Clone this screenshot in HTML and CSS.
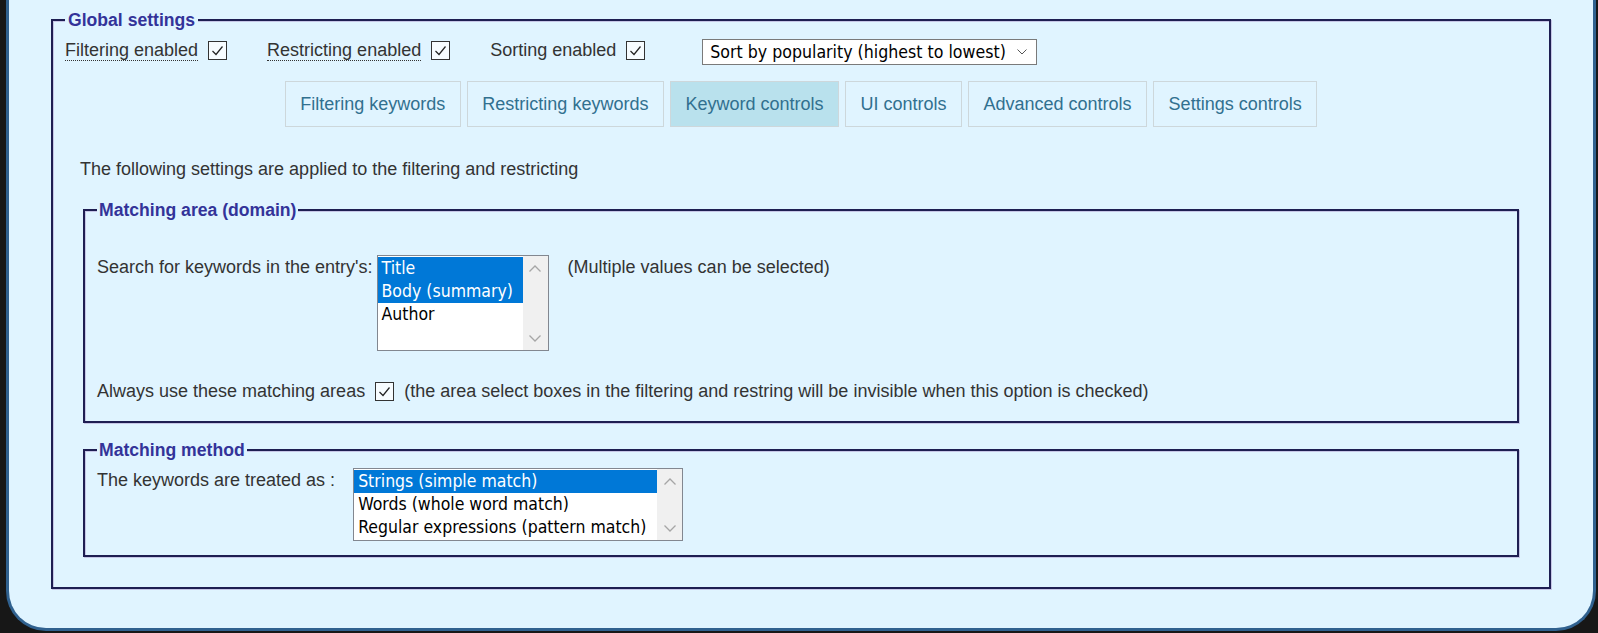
FILE: index.html
```html
<!DOCTYPE html>
<html>
<head>
<meta charset="utf-8">
<link rel="stylesheet" href="styles.css">
</head>
<body>
<div class="frame">
  <fieldset class="fs global">
    <legend>Global settings</legend>
    <div class="toprow">
      <div class="cbgroup">
        <span class="lbl dotted">Filtering enabled</span>
        <span class="cb"><svg viewBox="0 0 17 17" width="17" height="17"><path d="M3.5 9 L7 12.5 L13.5 4.5" fill="none" stroke="#222" stroke-width="1.2"/></svg></span>
      </div>
      <div class="cbgroup">
        <span class="lbl dotted">Restricting enabled</span>
        <span class="cb"><svg viewBox="0 0 17 17" width="17" height="17"><path d="M3.5 9 L7 12.5 L13.5 4.5" fill="none" stroke="#222" stroke-width="1.2"/></svg></span>
      </div>
      <div class="cbgroup">
        <span class="lbl">Sorting enabled</span>
        <span class="cb"><svg viewBox="0 0 17 17" width="17" height="17"><path d="M3.5 9 L7 12.5 L13.5 4.5" fill="none" stroke="#222" stroke-width="1.2"/></svg></span>
      </div>
      <div class="select">
        <span class="select-text">Sort by popularity (highest to lowest)</span>
        <svg class="select-arrow" viewBox="0 0 10 6" width="10" height="6"><path d="M0.5 0.5 L5 5 L9.5 0.5" fill="none" stroke="#555" stroke-width="1"/></svg>
      </div>
    </div>
    <div class="tabs">
      <div class="tab">Filtering keywords</div>
      <div class="tab">Restricting keywords</div>
      <div class="tab active">Keyword controls</div>
      <div class="tab">UI controls</div>
      <div class="tab">Advanced controls</div>
      <div class="tab">Settings controls</div>
    </div>
    <p class="desc">The following settings are applied to the filtering and restricting</p>
    <fieldset class="fs inner area">
      <legend>Matching area (domain)</legend>
      <div class="row search">
        <span class="lbl lb-label1">Search for keywords in the entry's:</span>
        <div class="listbox lb1">
          <div class="options">
            <div class="option sel">Title</div>
            <div class="option sel">Body (summary)</div>
            <div class="option">Author</div>
          </div>
          <div class="scrollbar">
            <svg viewBox="0 0 12 7" width="12" height="7"><path d="M0.5 6.5 L6 1 L11.5 6.5" fill="none" stroke="#a6a6a6" stroke-width="1.3"/></svg>
            <svg viewBox="0 0 12 7" width="12" height="7"><path d="M0.5 0.5 L6 6 L11.5 0.5" fill="none" stroke="#a6a6a6" stroke-width="1.3"/></svg>
          </div>
        </div>
        <span class="lbl note">(Multiple values can be selected)</span>
      </div>
      <div class="row always">
        <span class="lbl">Always use these matching areas</span>
        <span class="cb"><svg viewBox="0 0 17 17" width="17" height="17"><path d="M3.5 9 L7 12.5 L13.5 4.5" fill="none" stroke="#222" stroke-width="1.2"/></svg></span>
        <span class="lbl after">(the area select boxes in the filtering and restring will be invisible when this option is checked)</span>
      </div>
    </fieldset>
    <fieldset class="fs inner method">
      <legend>Matching method</legend>
      <div class="row">
        <span class="lbl lb-label2">The keywords are treated as :</span>
        <div class="listbox lb2">
          <div class="options">
            <div class="option sel">Strings (simple match)</div>
            <div class="option">Words (whole word match)</div>
            <div class="option">Regular expressions (pattern match)</div>
          </div>
          <div class="scrollbar">
            <svg viewBox="0 0 12 7" width="12" height="7"><path d="M0.5 6.5 L6 1 L11.5 6.5" fill="none" stroke="#a6a6a6" stroke-width="1.3"/></svg>
            <svg viewBox="0 0 12 7" width="12" height="7"><path d="M0.5 0.5 L6 6 L11.5 0.5" fill="none" stroke="#a6a6a6" stroke-width="1.3"/></svg>
          </div>
        </div>
      </div>
    </fieldset>
  </fieldset>
</div>
</body>
</html>
```
FILE: styles.css
```css
* { box-sizing: border-box; }
html, body { margin: 0; padding: 0; }
body {
  background: #171717;
  font-family: "Liberation Sans", Arial, sans-serif;
  font-size: 18px;
  color: #333;
  width: 1598px;
  height: 633px;
  overflow: hidden;
}
.frame {
  margin: 0 2px 0 6px;
  height: 631px;
  border: 3px solid #30618f;
  border-top: 0;
  border-radius: 0 0 40px 40px;
  background: #e0f4ff;
  padding: 10px 42px 0 42px;
}
.fs {
  margin: 0;
  border: 2px solid #1e1e52;
  box-shadow: 1px 1px 0 #c6c6e6, inset 1px 1px 0 #c6c6e6;
  padding: 7px 12px 30px 12px;
  min-width: 0;
}
.fs > legend {
  padding: 0 2px;
  font-weight: bold;
  font-size: 17.6px;
  color: #333399;
  line-height: 20px;
  background: #e0f4ff;
}
.global > legend { padding: 0 3px; }
.toprow {
  display: flex;
  align-items: center;
  height: 26px;
}
.cbgroup {
  display: flex;
  align-items: center;
  gap: 10px;
  margin-right: 40px;
}
.lbl { line-height: 20px; white-space: nowrap; }
.dotted { border-bottom: 1px dotted #333; }
.cb {
  display: inline-flex;
  width: 19px;
  height: 19px;
  border: 1px solid #333;
  background: #f7fcff;
  flex: none;
}
.select {
  margin-left: 17px;
  margin-top: 3px;
  width: 335px;
  height: 26px;
  border: 1px solid #7a7a7a;
  background: #fff;
  display: flex;
  align-items: center;
  justify-content: space-between;
  padding: 0 9px 0 7px;
  font-family: "DejaVu Sans Condensed", "Liberation Sans", sans-serif;
  font-size: 17.6px;
  color: #000;
}
.select-arrow { margin-top: 1px; }
.tabs {
  display: flex;
  justify-content: center;
  gap: 6px;
  margin-top: 18px;
}
.tab {
  border: 1px solid #cdd7db;
  padding: 0 14.5px;
  line-height: 44px;
  color: #31708f;
  white-space: nowrap;
}
.tab.active { background: #b9e1ed; }
.desc {
  margin: 32px 0 0 15px;
  line-height: 20px;
}
.inner {
  margin: 21px 18px 0 18px;
}
.area { padding: 35px 12px 19px 12px; }
.method { margin-top: 17px; padding: 8px 12px 14px 12px; }
.row {
  display: flex;
  align-items: flex-start;
}
.row.always {
  align-items: center;
  height: 22px;
  margin-top: 29px;
}
.lb-label1 { margin: 2px 4px 0 0; }
.lb-label2 { margin: 2px 18px 0 0; }
.note { margin: 2px 0 0 19px; }
.always .cb { margin-left: 10px; }
.after { margin-left: 10px; }
.listbox {
  display: flex;
  border: 1px solid #828790;
  background: #fff;
  font-family: "DejaVu Sans Condensed", "Liberation Sans", sans-serif;
  font-size: 17.5px;
  color: #000;
}
.lb1 { width: 172px; height: 96px; }
.lb2 { width: 330px; height: 73px; }
.options {
  flex: 1;
  padding-top: 1px;
  min-width: 0;
}
.option {
  line-height: 23px;
  height: 23px;
  padding-left: 4px;
  white-space: nowrap;
  overflow: hidden;
}
.option.sel { background: #0078d7; color: #fff; }
.scrollbar {
  width: 25px;
  background: #f0f0f0;
  display: flex;
  flex-direction: column;
  justify-content: space-between;
  align-items: center;
  padding: 9px 0 8px 0;
}
```
